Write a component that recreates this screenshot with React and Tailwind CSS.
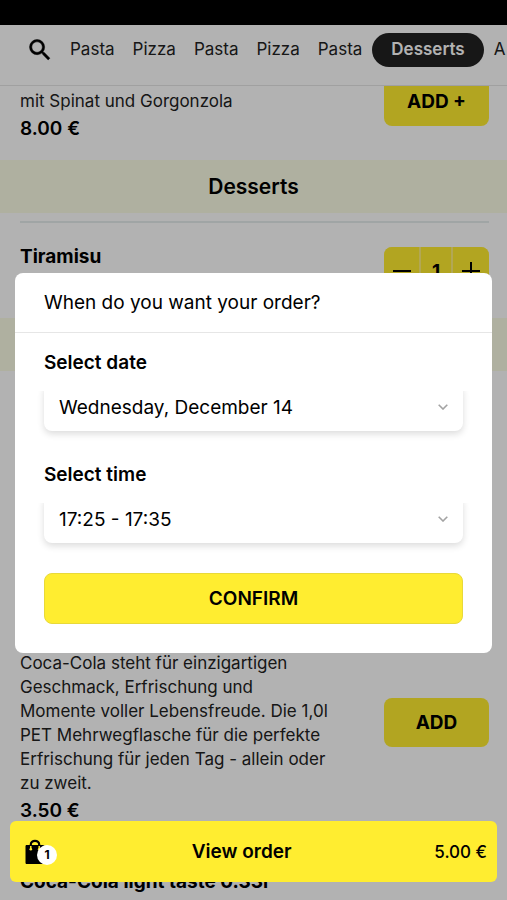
const categories = ["Pasta", "Pizza", "Pasta", "Pizza", "Pasta"];

function SearchIcon() {
  return (
    <svg viewBox="0 0 24 24" className="size-7" aria-hidden="true">
      <path
        fill="currentColor"
        stroke="currentColor"
        strokeWidth="0.4"
        d="M15.5 14h-.79l-.28-.27A6.471 6.471 0 0 0 16 9.5 6.5 6.5 0 1 0 9.5 16c1.61 0 3.09-.59 4.23-1.57l.27.28v.79l5 4.99L20.49 19l-4.99-5zm-6 0C7.01 14 5 11.99 5 9.5S7.01 5 9.5 5 14 7.01 14 9.5 11.99 14 9.5 14z"
      />
    </svg>
  );
}

function BagIcon() {
  return (
    <svg viewBox="0 0 20 26" className="h-[26px] w-5" aria-hidden="true">
      <path d="M5.8 7V5.600a4.200 3.800 0 0 1 8.400 0V7" fill="none" stroke="#000" strokeWidth="2.2" />
      <path d="M1 6.500h18v18H1z" fill="#000" stroke="#000" strokeLinejoin="round" />
      <path d="M5.800 7v3.500M14.200 7v3.500" fill="none" stroke="#ffed30" strokeWidth="1.5" />
      <circle cx="5.8" cy="10.3" r="1.3" fill="#ffed30" />
      <circle cx="14.2" cy="10.3" r="1.3" fill="#ffed30" />
    </svg>
  );
}

function AddButton({ children }) {
  return (
    <button
      type="button"
      className="h-[49px] w-[105px] shrink-0 rounded-lg bg-[#ffed30] pt-[2px] text-[19px] font-bold"
    >
      {children}
    </button>
  );
}

function SectionTitle({ children }) {
  return (
    <h2 className="flex h-[53px] items-center justify-center bg-[#fbfce6] text-[21px] font-semibold">
      {children}
    </h2>
  );
}

function Stepper() {
  return (
    <div className="grid h-[49px] w-[105px] shrink-0 grid-cols-[35px_30px_36px] gap-[2px] overflow-hidden rounded-lg bg-[#fff07a]">
      <button type="button" aria-label="Remove one" className="flex items-center justify-center bg-[#ffed30] pb-[2px]">
        <svg viewBox="0 0 18 18" className="size-[18px]" stroke="#000" strokeWidth="2">
          <path d="M0 9h18" />
        </svg>
      </button>
      <span className="flex items-center justify-center bg-[#ffed30] pt-[2px] text-[19px] font-bold">1</span>
      <button type="button" aria-label="Add one" className="flex items-center justify-center bg-[#ffed30] pb-[2px]">
        <svg viewBox="0 0 18 18" className="size-[18px]" stroke="#000" strokeWidth="2">
          <path d="M0 9h18M9 0v18" />
        </svg>
      </button>
    </div>
  );
}

function SelectField({ id, label, value }) {
  return (
    <div className="flex flex-col gap-[6px]">
      <label htmlFor={id} className="text-[19px] leading-7 font-semibold">
        {label}
      </label>
      <div className="grid [clip-path:inset(8px_-12px_-14px_-12px)]">
        <select
          id={id}
          className="col-start-1 row-start-1 h-12 w-full appearance-none rounded-lg bg-white px-[15px] pt-[2px] text-[19px] shadow-[0_3px_7px_rgba(0,0,0,0.14)]"
        >
          <option>{value}</option>
        </select>
        <svg
          viewBox="0 0 10 6"
          className="pointer-events-none col-start-1 row-start-1 mr-[15px] h-[6px] w-[10px] self-center justify-self-end"
          fill="none"
          stroke="#a3a3a3"
          strokeWidth="1.6"
          aria-hidden="true"
        >
          <path d="M.7.7 5 5 9.300.7" />
        </svg>
      </div>
    </div>
  );
}

function OrderDialog() {
  return (
    <div role="dialog" aria-modal="true" aria-labelledby="dialog-title" className="w-full rounded-lg bg-white">
      <h1
        id="dialog-title"
        className="flex h-[60px] items-center border-b border-[#e6e6e6] px-[29px] pt-[2px] text-[19px]"
      >
        When do you want your order?
      </h1>
      <form className="flex flex-col gap-[30px] px-[29px] pt-4 pb-[29px]">
        <SelectField id="date" label="Select date" value="Wednesday, December 14" />
        <SelectField id="time" label="Select time" value="17:25 - 17:35" />
        <button
          type="button"
          className="h-[51px] rounded-lg border border-[#e8d93a] bg-[#ffed30] pt-[2px] text-[19px] font-semibold"
        >
          CONFIRM
        </button>
      </form>
    </div>
  );
}

export default function App() {
  return (
    <div className="relative flex h-screen flex-col overflow-hidden bg-white font-['Inter','Liberation_Sans',sans-serif] text-black">
      <div className="h-[25px] shrink-0 bg-black" />

      <nav className="flex h-[61px] shrink-0 items-center overflow-hidden border-b border-[#e6e6e6] pb-[10px] pl-[26px] text-[17px] whitespace-nowrap text-[#222]">
        <button type="button" aria-label="Search" className="mr-4 shrink-0 text-black">
          <SearchIcon />
        </button>
        <div className="flex shrink-0 gap-[18px]">
          {categories.map((name, i) => (
            <a key={i} href="#menu">
              {name}
            </a>
          ))}
        </div>
        <a
          href="#desserts"
          className="mx-[10px] flex h-[34px] shrink-0 items-center rounded-full bg-[#222] px-[19px] font-semibold text-white"
        >
          Desserts
        </a>
        <a href="#drinks">A</a>
      </nav>

      <main id="menu" className="min-h-0 flex-1 overflow-hidden">
        <article className="-mt-[9px] flex h-[83px] justify-between pr-[18px] pl-5">
          <div className="pt-3">
            <p className="text-[17px] leading-6 text-[#222]">mit Spinat und Gorgonzola</p>
            <p className="pt-1 text-[19px] leading-6 font-semibold">8.00 €</p>
          </div>
          <AddButton>ADD +</AddButton>
        </article>

        <SectionTitle>Desserts</SectionTitle>
        <div className="pt-2 pr-[18px] pl-5" id="desserts">
          <hr className="border-t-2 border-[#e5ecec]" />
        </div>
        <article className="flex h-[95px] justify-between pt-6 pr-[18px] pl-5">
          <h3 className="text-[19px] leading-5 font-bold">Tiramisu</h3>
          <Stepper />
        </article>

        <div className="h-[53px] bg-[#fbfce6]" />
        <article className="flex items-end justify-between pt-[280px] pr-[18px] pl-5">
          <div className="w-[310px]">
            <p className="text-[17px] leading-6 text-[#222]">
              Coca-Cola steht für einzigartigen Geschmack, Erfrischung und Momente voller
              Lebensfreude. Die 1,0l PET Mehrwegflasche für die perfekte Erfrischung für jeden Tag -
              allein oder zu zweit.
            </p>
            <p className="pt-1 text-[19px] leading-6 font-semibold">3.50 €</p>
          </div>
          <div className="pb-[76px]">
            <AddButton>ADD</AddButton>
          </div>
        </article>
        <h3 className="px-5 pt-[47px] text-[19px] leading-6 font-bold">Coca-Cola light taste 0.33l</h3>
      </main>

      <div className="absolute inset-x-0 top-[25px] bottom-0 flex items-center bg-black/30 px-[15px] pt-px">
        <OrderDialog />
      </div>

      <button
        type="button"
        className="absolute inset-x-[10px] bottom-[18px] flex h-[61px] items-center justify-between rounded-md bg-[#ffed30] pt-[2px] pr-[10px] pl-[15px]"
      >
        <span className="relative flex w-6 pb-[2px]">
          <BagIcon />
          <span className="absolute top-[6px] left-3 flex size-5 items-center justify-center rounded-full bg-white text-xs font-bold">
            1
          </span>
        </span>
        <span className="text-[19px] font-semibold">View order</span>
        <span className="text-[17px] font-medium">5.00 €</span>
      </button>
    </div>
  );
}
